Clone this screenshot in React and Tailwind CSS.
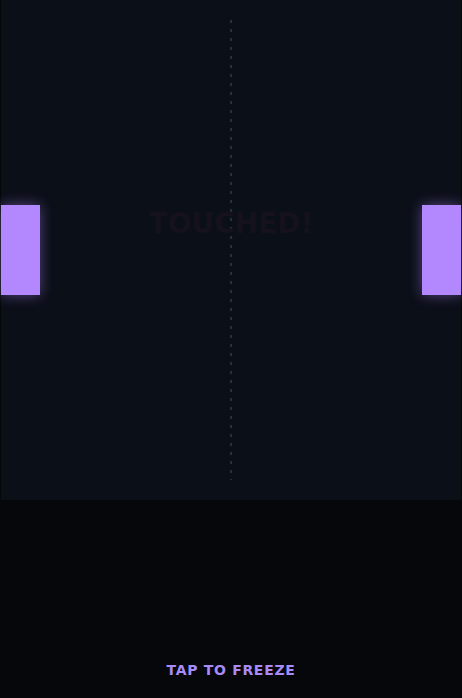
import React from "react";

export default function App() {
    return (
        <div className="w-[462px] h-[698px] bg-[#05070a] flex flex-col overflow-hidden" style={{ fontFamily: '"DejaVu Sans", Verdana, sans-serif' }}>
            {/* Game area */}
            <div className="relative h-[500px] mx-px bg-[#0b0f18]">
                {/* Center net */}
                <div className="absolute left-[229px] top-[20px] bottom-[20px] w-[2px] bg-[repeating-linear-gradient(to_bottom,#2a303b_0px,#2a303b_3px,transparent_3px,transparent_9px)]" />

                {/* Touched label */}
                <div className="absolute inset-x-0 top-[206px] flex justify-center">
                    <span className="text-[28px] leading-9 font-bold text-[#15111d]">TOUCHED!</span>
                </div>

                {/* Paddles */}
                <div className="absolute left-0 top-[205px] w-[39px] h-[90px] bg-[#b388ff] shadow-[0_0_14px_rgba(179,136,255,0.45)]" />
                <div className="absolute right-0 top-[205px] w-[39px] h-[90px] bg-[#b388ff] shadow-[0_0_14px_rgba(179,136,255,0.45)]" />
            </div>

            {/* Control strip */}
            <div className="flex-1 flex items-end justify-center pb-[18px]">
                <span className="text-sm leading-5 font-bold tracking-wider text-[#a78bfa]">TAP TO FREEZE</span>
            </div>
        </div>
    );
}
